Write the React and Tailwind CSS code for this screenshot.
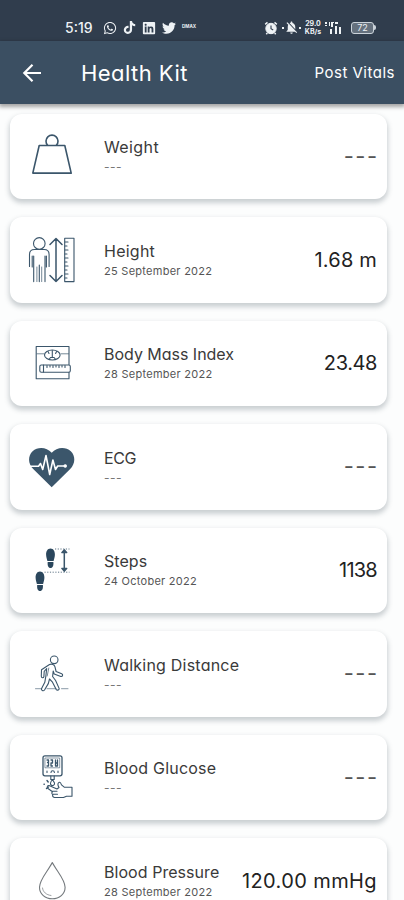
import { FaWhatsapp, FaTiktok, FaLinkedin, FaTwitter } from "react-icons/fa";
import { MdNotificationsOff } from "react-icons/md";

const IconBox = ({ children }) => (
    <svg
        viewBox="0 0 56 56"
        className="h-14 w-14 shrink-0 text-[#3b566b]"
        fill="none"
        stroke="currentColor"
        strokeWidth="1.1"
        strokeLinejoin="round"
        strokeLinecap="round"
    >
        {children}
    </svg>
);

const WeightIcon = () => (
    <IconBox>
        <g strokeWidth="1.6">
            <path d="M15.2 17.5h25.6l6.4 27.6H8.8z" />
            <path d="M23.6 17.2a6 6 0 1 1 8.8 0" />
        </g>
    </IconBox>
);

const HeightIcon = () => (
    <IconBox>
        <circle cx="15.3" cy="11.4" r="5.8" />
        <path d="M5.5 34.5V22.5c0-3 2-5 5-5h9.6c3 0 5 2 5 5v12" />
        <path d="M9.7 24v25.6M21 24v25.6M15.3 33v16.6M8.2 24v11M22.4 24v11" />
        <path d="M12.9 35v14.6M17.7 35v14.6" strokeWidth="0.7" />
        <path
            d="M32 6.5v43M26 12.5l6-6 6 6M26 43.5l6 6 6-6"
            strokeWidth="1.5"
        />
        <path d="M40.7 6.2H50v43.4h-9.3z" />
        <path d="M41 10h3M41 14h2M41 18h3M41 22h2M41 26h3M41 30h2M41 34h3M41 38h2M41 42h3M41 46h2" />
    </IconBox>
);

const BmiIcon = () => (
    <IconBox>
        <path d="M45 29.5V11.5H12.2v32.3H45v-6.5" />
        <path d="M13 18.8h7M37 18.8h7.5" strokeWidth="0.7" />
        <ellipse cx="28.3" cy="20" rx="7.8" ry="5" />
        <path d="M28.3 15.5v6.5M24 16.5l1 2M32.6 16.5l-1 2M25 24.5l1.5-2h3.6l1.5 2" />
        <rect x="15.8" y="30" width="30.5" height="7.2" rx="1.5" />
        <path d="M19.5 30v7M23 30.5v2M26 30.5v1.5M29 30.5v2M32 30.5v1.5M35 30.5v2M38 30.5v1.5M41 30.5v2" />
    </IconBox>
);

const EcgIcon = () => (
    <IconBox>
        <path
            d="M28.5 48.2 10 30C4.6 24.6 4.6 16.6 9.4 12.2c5.2-4.8 14-4.4 19.1 1.6 5.1-6 13.9-6.4 19.1-1.6 4.8 4.4 4.8 12.4-.6 17.8z"
            fill="currentColor"
            stroke="none"
            transform="translate(-0.8 0)"
        />
        <path
            d="M6 27.2h8.500l2-2.700 2.200 6 3.300-14 3.700 19 3.200-14.500 2.600 9.500 2.200-3.500h7"
            stroke="white"
            strokeWidth="1.6"
        />
        <circle cx="41.200" cy="27" r="1.200" fill="white" stroke="white" />
    </IconBox>
);

const Footprint = () => (
    <g fill="currentColor" stroke="none">
        <path d="M4.500 0C1.500 0 0 3 .1 6.200c.1 2.600.8 4.200 1.300 6.200h6.200c.5-2 1.200-3.600 1.300-6.200C9 3 7.500 0 4.500 0z" />
        <path d="M1.700 13.600h5.700c.3 3.400-.6 6-2.900 6s-3.200-2.600-2.800-6z" />
    </g>
);

const StepsIcon = () => (
    <IconBox>
        <g className="text-[#2b475d]">
            <g transform="translate(22 6.500)">
                <Footprint />
            </g>
            <g transform="translate(11.500 29.500)">
                <Footprint />
            </g>
        </g>
        <path
            d="M31 7h14.500M20.500 30.200h25"
            strokeDasharray="1.200 1.500"
            strokeWidth="0.800"
            strokeLinecap="butt"
        />
        <path d="M40.300 10v17" strokeWidth="1.500" />
        <path
            d="M40.300 7.600l2.600 3h-5.200zM40.300 29.400l2.600-3h-5.200z"
            fill="currentColor"
        />
    </IconBox>
);

const WalkIcon = () => (
    <IconBox>
        <circle cx="30.200" cy="13.800" r="3.800" />
        <path d="M25.500 18.500c2.500-1 4.800 0 5.400 2.200l1.200 4.800 5.600 2.300c1.700.8.9 3-.9 2.600l-6.600-2.400-1-3-.6 5.500 3 4 3.400 7.600c.8 1.800-1.700 2.800-2.900 1.200l-3.600-7.100-3-3.200-1.200 4.600-3.800 6.400c-1.300 1.600-3.700.3-2.900-1.500l3.200-6.200 1.100-6.500.8-7.300-2.500 2.800-.3 5.300c-.3 1.600-2.500 1.500-2.600-.3l.2-6.500z" />
        <path d="M24.800 22l-1.600 8" strokeWidth="0.700" />
        <path d="M11.500 42.700h6M23 42.700h9M37.500 42.700H44" strokeWidth="0.600" />
    </IconBox>
);

const GlucoseIcon = () => (
    <IconBox>
        <rect x="19" y="6.800" width="19" height="20" rx="2" strokeWidth="1.300" />
        <rect x="21.300" y="9" width="14.400" height="9.800" strokeWidth="0.600" />
        <path
            d="M23 11h1.500v6H23h1.500M27 11h1.500v3H27v3h1.500M31.500 11v6h2v-6M23.500 13.500h1M32 14h1.500"
            strokeWidth="1.300"
        />
        <path d="M23 22v1.500M34 22v1.500M27 23.500a1.700 1.700 0 0 1 3.400 0" />
        <path d="M26.800 27v3.500h3.400V27M28.500 30.500c-2 2.500-3 4-1.500 5.500s4 0 3.500-2z" />
        <path
            d="M20 35.200h.3M23 31.500l1.200 1.500M22.500 39.500l2-1.500"
            strokeWidth="1.400"
        />
        <path d="M25 36.500l8 3.500 2-1.500c-1.500-2.500-1.500-4.500.3-5.200 1-.3 1.600.7 2.200 2.500l3 2.500h7.500v9h-5.500l-3 1.200H30.500c-2-.3-2.300-2-1.500-2.800-1.500-.7-1.500-2.200-.5-3L24 39.500c-1.500-1.300-.5-3.300 1-3z" />
        <path d="M29 45.200h4.500M28.500 42.200h4.500" />
    </IconBox>
);

const DropIcon = () => (
    <IconBox>
        <g className="text-[#74797d]">
            <path d="M28.300 9.500C24 18 15.500 26.500 15.500 34.300c0 6.800 5.800 11.500 12.800 11.500s12.800-4.700 12.800-11.500C41.100 26.500 32.600 18 28.300 9.500z" />
            <path d="M18.500 35c.3 3.800 3.800 7 8.500 7.500" strokeWidth="0.700" />
        </g>
    </IconBox>
);

const AlarmIcon = () => (
    <svg viewBox="0 0 14 14" className="h-[14px] w-[14px]" fill="none" stroke="currentColor">
        <circle cx="7" cy="7.500" r="5.200" fill="currentColor" />
        <path d="M1.200 3.400l2.300-2M12.800 3.400l-2.300-2M3.300 12l-1 1.300M10.700 12l1 1.300" strokeWidth="1.500" />
        <path d="M7 4.500v3.200l2.200 1.200" stroke="#303d4d" strokeWidth="1.100" />
    </svg>
);

const vitals = [
    { name: "Weight", date: "---", value: "---", Icon: WeightIcon, spacing: "tracking-[0.4px]" },
    { name: "Height", date: "25 September 2022", value: "1.68 m", Icon: HeightIcon, spacing: "tracking-[0.25px]", valueSpacing: "tracking-[0.2px]" },
    { name: "Body Mass Index", date: "28 September 2022", value: "23.48", Icon: BmiIcon, spacing: "tracking-[-0.02px]", valueSpacing: "tracking-[-0.4px]" },
    { name: "ECG", date: "---", value: "---", Icon: EcgIcon, spacing: "tracking-[-0.4px]" },
    { name: "Steps", date: "24 October 2022", value: "1138", Icon: StepsIcon, spacing: "tracking-[0.05px]", valueSpacing: "tracking-[-0.75px]" },
    { name: "Walking Distance", date: "---", value: "---", Icon: WalkIcon, spacing: "tracking-[0.22px]" },
    { name: "Blood Glucose", date: "---", value: "---", Icon: GlucoseIcon, spacing: "tracking-[0.2px]" },
    { name: "Blood Pressure", date: "28 September 2022", value: "120.00 mmHg", Icon: DropIcon, spacing: "tracking-[0.05px]", valueSpacing: "tracking-[0.4px]" },
];

const Dashes = ({ big }) => (
    <span
        className={
            big
                ? "text-[22px] tracking-[1.5px] -mr-[1.5px] text-[#555]"
                : "text-[12px] tracking-[0.5px] text-[#777]"
        }
    >
        ---
    </span>
);

const VitalCard = ({ name, date, value, Icon, spacing, valueSpacing }) => {
    return (
        <div className="flex h-[85.5px] shrink-0 items-center rounded-[12px] bg-white pr-[10px] pl-[14px] shadow-[0_3px_5px_1px_rgba(70,85,95,0.27)]">
            <Icon />
            <div className="ml-6 flex flex-col whitespace-nowrap">
                <div className={`text-[16px] leading-[22px] text-[#3a3a3a] ${spacing}`}>
                    {name}
                </div>
                <div className="h-[18px] text-[11px] leading-[18px] tracking-[0.27px] text-[#555]">
                    {date === "---" ? <Dashes /> : date}
                </div>
            </div>
            <div
                className={`ml-auto text-[20px] leading-7 whitespace-nowrap text-[#222] ${
                    valueSpacing || ""
                }`}
            >
                {value === "---" ? <Dashes big /> : value}
            </div>
        </div>
    );
};

const StatusBar = () => (
    <div className="flex h-[41px] shrink-0 items-center bg-[#303d4d] pt-[14px] pl-[65px] text-[#eef2f5]">
        <div className="w-[38px] text-[14px] leading-none font-medium">5:19</div>
        <div className="flex items-center gap-[6px]">
            <FaWhatsapp size={14} />
            <FaTiktok size={13} />
            <FaLinkedin size={14} />
            <FaTwitter size={14} />
            <span className="w-[13px] text-[4.500px] leading-none font-bold">DMAX</span>
        </div>
        <div className="ml-[69px] flex items-center">
            <AlarmIcon />
            <div className="ml-[4px] flex items-center">
                <div className="h-[2px] w-[2px] bg-current" />
                <MdNotificationsOff size={15} />
                <div className="h-[2px] w-[2px] bg-current" />
            </div>
            <div className="ml-[3px] flex w-[18px] flex-col items-center text-[7px] font-bold">
                <div className="h-[8px] leading-[8px]">29.0</div>
                <div className="h-[8px] leading-[8px]">KB/s</div>
            </div>
            <svg viewBox="0 0 19 14" className="ml-[3px] h-[14px] w-[19px]" fill="currentColor">
                <path d="M0 1h2v2H0zM0 4h2v1H0zM4 1h1v4H4zM6 1h3v1H8v4H6zM5 8h2v5H5zM10 5h2v8h-2zM10 1h3v2h-3zM14 6h2v7h-2z" />
            </svg>
            <div className="ml-[7px] flex items-center">
                <div className="flex h-[12px] w-[23px] items-center justify-center rounded-[3px] border border-[#cbd3da] bg-[#65717e] text-[9px] leading-none">
                    72
                </div>
                <div className="h-[5px] w-[2px] rounded-r bg-[#cbd3da]" />
            </div>
        </div>
    </div>
);

const App = () => {
    return (
        <div className="flex h-[900px] w-[404px] flex-col overflow-hidden bg-[#fcfdfd] font-['Inter','Liberation_Sans',sans-serif] [font-feature-settings:'cv11']">
            <StatusBar />
            <div className="z-10 flex h-[63px] shrink-0 items-center bg-[#3b4f62] pr-[9px] pl-[22px] text-white shadow-[0_2px_4px_1px_rgba(0,0,0,0.35)]">
                <svg
                    viewBox="0 0 20 20"
                    className="h-5 w-5"
                    fill="none"
                    stroke="currentColor"
                    strokeWidth="2.2"
                >
                    <path d="M19 10H2.500M10.500 1.800L2.300 10l8.200 8.200" />
                </svg>
                <h1 className="ml-[39px] text-[22px] leading-8 tracking-[0.45px]">Health Kit</h1>
                <button className="ml-auto pt-[2px] text-[15px] tracking-[0.5px]">Post Vitals</button>
            </div>
            <main className="flex flex-col gap-[18px] pt-[9.500px] pr-[17px] pl-[10px]">
                {vitals.map((vital) => (
                    <VitalCard key={vital.name} {...vital} />
                ))}
            </main>
        </div>
    );
};

export default App;
